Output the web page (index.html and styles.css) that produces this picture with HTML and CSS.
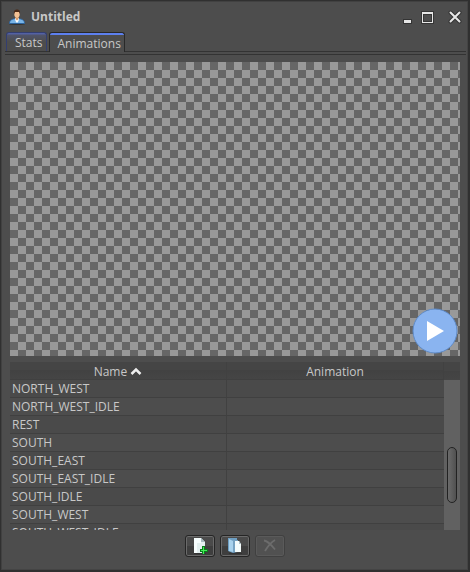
FILE: index.html
```html
<!DOCTYPE html>
<html lang="en">
<head>
<meta charset="utf-8">
<title>Untitled</title>
<link rel="stylesheet" href="styles.css">
</head>
<body>
<main class="window">
  <header class="titlebar">
    <svg class="app-icon" width="16" height="16" viewBox="0 0 16 16" aria-hidden="true">
      <ellipse cx="8" cy="15" rx="8" ry="1" fill="#333"/>
      <path d="M.5 14.5C.5 11.500 2 10.500 6 9.500h4c4 1 5.500 2 5.500 5z" fill="#78b4e8" stroke="#2d639c"/>
      <path d="M6 9h4l-.5 3L8 14l-1.500-2z" fill="#fff"/>
      <path d="M6.500 7h3v3L8 11.500 6.500 10z" fill="#d99a66"/>
      <ellipse cx="8" cy="5" rx="2.700" ry="3.800" fill="#f3c193"/>
      <path d="M5 5C4.500 1.500 6 .5 8 .5s3.500 1 3 4.500L10 3H6z" fill="#4a2a18"/>
    </svg>
    <h1 class="title">Untitled</h1>
    <div class="controls">
      <button class="control" type="button" aria-label="Minimize"><svg width="14" height="14" viewBox="0 0 14 14"><path d="M3 9h9v5H3z" fill="#333"/><path d="M4 10h7v3H4z" fill="#e6e6e6"/></svg></button>
      <button class="control" type="button" aria-label="Maximize"><svg width="14" height="14" viewBox="0 0 14 14"><path d="M1 1h13v13H1z" fill="#363636"/><path d="M2 2h11v11H2z" fill="#e6e6e6"/><path d="M3 4h9v8H3z" fill="#363636"/><path d="M4 5h7v6H4z" fill="#4d4d4d"/></svg></button>
      <button class="control control-close" type="button" aria-label="Close"><svg width="14" height="14" viewBox="0 0 14 14"><path d="M2.500 2.500l9 9m0-9l-9 9" stroke="#333" stroke-width="4" stroke-linecap="round"/><path d="M2.500 2.500l9 9m0-9l-9 9" stroke="#e6e6e6" stroke-width="2" stroke-linecap="round"/></svg></button>
    </div>
  </header>
  <nav class="tabs" role="tablist">
    <button class="tab" type="button" role="tab" aria-selected="false">Stats</button>
    <button class="tab tab-active" type="button" role="tab" aria-selected="true">Animations</button>
  </nav>
  <section class="content">
    <div class="preview">
      <button class="play" type="button" aria-label="Play"><svg width="46" height="46" viewBox="0 0 46 46"><circle cx="23" cy="23" r="22" fill="#8ab4f0" stroke="#5f8bc8"/><path d="M15 13v20l17-10z" fill="#fff"/></svg></button>
    </div>
    <div class="list">
      <table class="animations">
        <thead>
          <tr>
            <th scope="col">Name <svg width="12" height="9" viewBox="0 0 12 9" aria-hidden="true"><path d="M1.500 7L6 2.500 10.500 7" fill="none" stroke="#eee" stroke-width="2.500"/></svg></th>
            <th scope="col">Animation</th>
          </tr>
        </thead>
        <tbody>
          <tr><td>NORTH_WEST</td><td></td></tr>
          <tr><td>NORTH_WEST_IDLE</td><td></td></tr>
          <tr><td>REST</td><td></td></tr>
          <tr><td>SOUTH</td><td></td></tr>
          <tr><td>SOUTH_EAST</td><td></td></tr>
          <tr><td>SOUTH_EAST_IDLE</td><td></td></tr>
          <tr><td>SOUTH_IDLE</td><td></td></tr>
          <tr><td>SOUTH_WEST</td><td></td></tr>
          <tr><td>SOUTH_WEST_IDLE</td><td></td></tr>
        </tbody>
      </table>
      <div class="scroll">
        <div class="scroll-corner"></div>
        <div class="scroll-track"><div class="scroll-thumb"></div></div>
      </div>
    </div>
    <div class="actions">
      <button class="action" type="button" aria-label="Add animation"><svg width="16" height="16" viewBox="0 0 16 16"><path d="M2 15h12v1H2z" fill="#333"/><path d="M2 0h7l4 4v11H2z" fill="#e4f1f1"/><path d="M2 0h7v5H5v10H2z" fill="#f8ffff"/><path d="M9 0l4 4H9z" fill="#a8bdc1"/><path d="M10 8h3v3h3v3h-3v2h-3v-2H8v-3h2z" fill="#087d1c"/><path d="M11 9h1v3h3v1h-3v3h-1v-3H9v-1h2z" fill="#42ef55"/></svg></button>
      <button class="action" type="button" aria-label="Copy animation"><svg width="16" height="16" viewBox="0 0 16 16"><path d="M2 15h13v1H2z" fill="#333"/><path d="M1 0h9v14l-4 1-5-2z" fill="#6e9fc3"/><path d="M2 1l4 2v11l-4-1z" fill="#a8d2ed"/><path d="M6 2h5v12H6z" fill="#76a3c3"/><path d="M8 3h4l2 3v8H8z" fill="#f4fcfc"/><path d="M12 3l2 3h-2z" fill="#adc1c9"/></svg></button>
      <button class="action" type="button" aria-label="Delete animation" disabled><svg width="16" height="16" viewBox="0 0 16 16"><path d="M2 2.500c4 .5 7 4 11 9M13 2C8 5 6 8 3 13" fill="none" stroke="#6c6c6c" stroke-width="1.800"/></svg></button>
    </div>
  </section>
</main>
</body>
</html>
```

FILE: styles.css
```css
* { box-sizing: border-box; }

body {
  margin: 0;
  background: #4d4d4d;
  color: #c8c8c8;
  font: 12px/16px "Open Sans", "Noto Sans", sans-serif;
}

button {
  padding: 0;
  border: 0;
  background: none;
  color: inherit;
  font: inherit;
}

svg { display: block; }

.window {
  display: flex;
  flex-direction: column;
  min-height: 100vh;
  border: 1px solid #303030;
  border-width: 1px 2px 2px 1px;
  box-shadow: inset 1px 1px #414141, inset -1px -1px #444;
}

.titlebar {
  display: flex;
  align-items: center;
  height: 31px;
  padding: 0 6px 0 8px;
}

.title {
  margin: 0 auto 0 6px;
  font-size: 12px;
  font-weight: 700;
}

.controls { display: flex; gap: 6px; }
.control-close { margin-left: 8px; }

.tabs {
  display: flex;
  align-items: flex-end;
  gap: 2px;
  height: 20px;
  margin: 0 2px 0 4px;
  border-bottom: 1px solid #333;
}

.tab {
  height: 19px;
  padding: 2px 3px 0 8px;
  border: 1px solid #333e70;
  border-bottom: 0;
  border-radius: 3px 3px 0 0;
  background: linear-gradient(#5361a4 0 1px, #50546a 2px, #4d4d4d 9px);
}

.tab:first-child { margin-left: 1px; }

.tab-active {
  margin-bottom: -1px;
  height: 20px;
  border-color: #292929;
  background: linear-gradient(#5d80ef 0 2px, #4d4d4d 2px);
}

.content {
  display: flex;
  flex: 1;
  flex-direction: column;
  margin: 2px 2px 0 4px;
  padding: 7px 6px 13px 5px;
  border-top: 1px solid #333;
}

.preview {
  position: relative;
  flex: 1;
  min-height: 120px;
  background: repeating-conic-gradient(#666 0 25%, #999 0 50%) 0 0 / 16px 16px;
}

.play {
  position: absolute;
  right: 2px;
  bottom: 2px;
}

.list {
  display: flex;
  align-items: flex-start;
  height: 168px;
  margin-top: 6px;
  overflow: hidden;
}

.animations {
  flex: 1;
  width: 100%;
  table-layout: fixed;
  border-collapse: separate;
  border-spacing: 0;
}

.animations th,
.animations td {
  height: 18px;
  padding: 1px 2px 0;
  border-right: 1px solid #414141;
  border-bottom: 1px solid #404040;
  font-weight: 400;
}

.animations th {
  padding-top: 2px;
  line-height: 15px;
  background: linear-gradient(#454545 0 50%, #424242 50%, #454545);
  color: #c8c8c8;
}

.animations th svg { display: inline-block; }
.animations td:last-child { border-right: 0; }
.animations tbody tr:nth-child(odd) { background: #4a4a4a; }

.scroll {
  display: flex;
  flex-direction: column;
  width: 16px;
  height: 100%;
}

.scroll-corner {
  height: 18px;
  background: linear-gradient(#454545 0 50%, #424242 50%, #454545);
}

.scroll-track {
  flex: 1;
  padding: 67px 3px 0;
  background: #616161;
}

.scroll-thumb {
  height: 56px;
  border: 1px solid #222;
  border-radius: 5px;
  background: linear-gradient(90deg, #6b6b6b, #505050);
}

.actions {
  display: flex;
  justify-content: center;
  gap: 5px;
  margin-top: 5px;
}

.action {
  display: grid;
  place-items: center;
  width: 30px;
  height: 22px;
  border: 1px solid #252525;
  border-radius: 3px;
  background: linear-gradient(#4a4a4a 50%, #3e3e3e 50%);
  box-shadow: inset 0 0 0 1px #6a6a6a;
}

.action:disabled {
  border-color: #404040;
  background: #515151;
  box-shadow: inset 0 0 0 1px #5a5a5a;
}
```
